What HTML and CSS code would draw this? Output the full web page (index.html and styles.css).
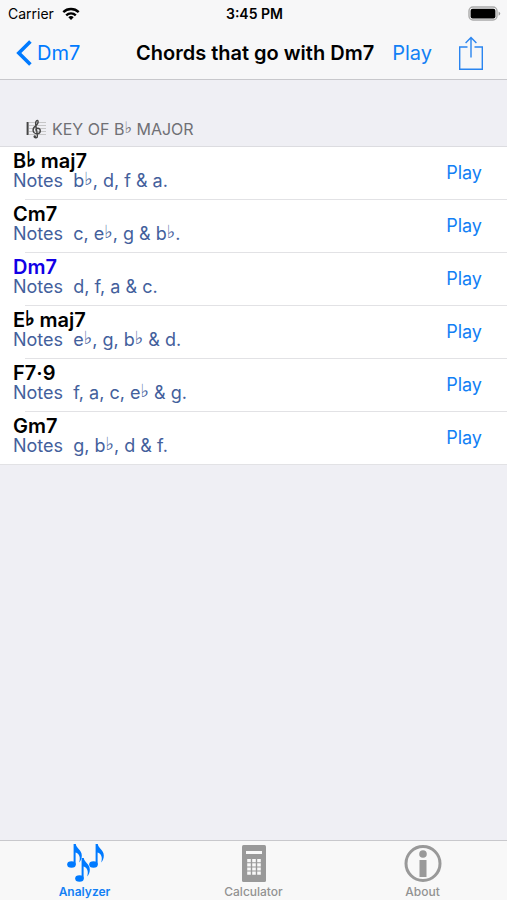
FILE: index.html
```html
<!DOCTYPE html>
<html lang="en">
<head>
    <meta charset="UTF-8">
    <meta name="viewport" content="width=device-width, initial-scale=1.0">
    <title>Chords that go with Dm7</title>
    <link rel="stylesheet" href="styles.css">
</head>
<body>
    <header class="top">
        <div class="status-bar">
            <div class="carrier">
                <span>Carrier</span>
                <svg class="wifi" viewBox="0 0 18 14" width="18" height="14" fill="none" stroke="#000" stroke-width="2.4">
                    <path d="M1.3 5.2a11 11 0 0 1 15.4 0"/>
                    <path d="M4.2 8.3a7 7 0 0 1 9.6 0"/>
                    <path d="M9 13L6.3 10.3a3.9 3.9 0 0 1 5.4 0z" fill="#000" stroke="none"/>
                </svg>
            </div>
            <span class="time">3:45 PM</span>
            <svg class="battery" viewBox="0 0 33 15" width="33" height="15">
                <rect x="1" y="1" width="28" height="13" rx="4" fill="none" stroke="#aaa" stroke-width="1.4"/>
                <rect x="2.6" y="2.8" width="24.8" height="9.6" rx="2" fill="#000"/>
                <path d="M30.6 5.4q1.6.8 1.6 2.2t-1.6 2.2z" fill="#999"/>
            </svg>
        </div>
        <nav class="nav-bar">
            <a href="#" class="back">
                <svg viewBox="0 0 16 26" width="16" height="26" fill="none" stroke="#007aff" stroke-width="3.6">
                    <path d="M14.4 1.4L2.8 13l11.6 11.6"/>
                </svg>
                <span>Dm7</span>
            </a>
            <h1>Chords that go with Dm7</h1>
            <button class="play-all">Play</button>
            <button class="share" aria-label="Share">
                <svg viewBox="0 0 26 36" width="26" height="36" fill="none" stroke="#2a85f0" stroke-width="1.4">
                    <path d="M9.5 12H1.7v22.2h22.6V12h-7.8"/>
                    <path d="M13 22.5V2.6M7.6 8L13 2.6 18.4 8"/>
                </svg>
            </button>
        </nav>
    </header>

    <main>
        <h2 class="section-title">
            <svg viewBox="0 0 20 20" width="20" height="20" fill="none">
                <path d="M3 3.5h17M3 6.5h17M3 9.5h17M3 12.5h17M3 15.5h17" stroke="#bbb" stroke-width=".8"/>
                <path d="M1.6 3v13" stroke="#444" stroke-width="2"/>
                <path d="M11.2 12.2c-1.8-.3-1.8-3 .5-3 3.4 0 3.6 5.4-.5 5.4-5.2 0-5-5.2-2-7.4 2.6-2 3.4-3.2 2.8-5.2-.6-1.5-2.6-.2-2.4 2.6l1.8 12.2c.3 2.4-2.8 2.6-3.2.8" stroke="#444" stroke-width="1.4"/>
                <circle cx="8.8" cy="17.4" r="1.2" fill="#444"/>
            </svg>
            <span>KEY OF B<i class="flat">♭</i> MAJOR</span>
        </h2>
        <ul class="chords">
            <li>
                <div class="chord">
                    <h3>B<i class="flat">♭</i> maj7</h3>
                    <p>Notes&nbsp; b<i class="flat">♭</i>, d, f &amp; a.</p>
                </div>
                <button>Play</button>
            </li>
            <li>
                <div class="chord">
                    <h3>Cm7</h3>
                    <p>Notes&nbsp; c, e<i class="flat">♭</i>, g &amp; b<i class="flat">♭</i>.</p>
                </div>
                <button>Play</button>
            </li>
            <li>
                <div class="chord current">
                    <h3>Dm7</h3>
                    <p>Notes&nbsp; d, f, a &amp; c.</p>
                </div>
                <button>Play</button>
            </li>
            <li>
                <div class="chord">
                    <h3>E<i class="flat">♭</i> maj7</h3>
                    <p>Notes&nbsp; e<i class="flat">♭</i>, g, b<i class="flat">♭</i> &amp; d.</p>
                </div>
                <button>Play</button>
            </li>
            <li>
                <div class="chord">
                    <h3>F7·9</h3>
                    <p>Notes&nbsp; f, a, c, e<i class="flat">♭</i> &amp; g.</p>
                </div>
                <button>Play</button>
            </li>
            <li>
                <div class="chord">
                    <h3>Gm7</h3>
                    <p>Notes&nbsp; g, b<i class="flat">♭</i>, d &amp; f.</p>
                </div>
                <button>Play</button>
            </li>
        </ul>
    </main>

    <nav class="tab-bar">
        <a href="#" class="active">
            <svg viewBox="0 0 40 40" width="40" height="40">
                <defs>
                    <g id="note">
                        <ellipse cx="4.5" cy="20.5" rx="4.3" ry="3.3"/>
                        <path d="M6.6 0h2.2c.3 4.2 6 6.2 6 11.4 0 2.8-.8 5-2.600 7 1.600-5.200 0-8.600-3.600-9.800v12H6.600z"/>
                    </g>
                </defs>
                <g fill="#007aff">
                    <use href="#note" x="2" y="1"/>
                    <use href="#note" x="24" y="1"/>
                    <use href="#note" x="10" y="15"/>
                </g>
            </svg>
            <span>Analyzer</span>
        </a>
        <a href="#">
            <svg viewBox="0 0 40 40" width="40" height="40">
                <rect x="8" y="2" width="24" height="37" rx="1.5" fill="#999"/>
                <rect x="12" y="8" width="16" height="3" fill="#f8f8f8"/>
                <path d="M15 16v16M20 16v16M25 16v16" stroke="#f8f8f8" stroke-width="3.6" stroke-dasharray="3.2 1"/>
            </svg>
            <span>Calculator</span>
        </a>
        <a href="#">
            <svg viewBox="0 0 40 40" width="40" height="40">
                <circle cx="20" cy="20.5" r="17" fill="none" stroke="#999" stroke-width="3"/>
                <circle cx="20" cy="11" r="3.8" fill="#999"/>
                <path d="M16.5 17h7v17h-7z" fill="#999"/>
            </svg>
            <span>About</span>
        </a>
    </nav>
</body>
</html>
```

FILE: styles.css
```css
* {
    box-sizing: border-box;
}

body {
    margin: 0;
    min-height: 100vh;
    display: flex;
    flex-direction: column;
    background-color: #efeff4;
    font-family: Inter, "Liberation Sans", sans-serif;
    color: #000;
}

h1, h2, h3, p, ul {
    margin: 0;
    padding: 0;
}

svg {
    display: block;
}

a {
    color: #007aff;
    text-decoration: none;
}

button {
    padding: 0;
    border: none;
    background: none;
    color: #1280f5;
    font-family: inherit;
    cursor: pointer;
}

.flat {
    font-family: "DejaVu Sans", sans-serif;
    font-style: normal;
    line-height: 0;
    vertical-align: 2px;
}

/* Top bars */
.top {
    background-color: #f7f7f8;
    border-bottom: 1px solid #c8c8cc;
}

.status-bar {
    height: 27px;
    padding: 0 6px 0 8px;
    display: grid;
    grid-template-columns: 1fr auto 1fr;
    align-items: center;
    font-size: 14px;
}

.carrier {
    display: flex;
    align-items: center;
    gap: 8px;
}

.time {
    font-weight: 600;
}

.battery {
    justify-self: end;
}

.nav-bar {
    height: 52px;
    padding: 0 23px 0 16px;
    display: flex;
    align-items: center;
}

.back {
    display: flex;
    align-items: center;
    gap: 5px;
    font-size: 20px;
}

.nav-bar h1 {
    flex: 1;
    text-align: right;
    font-size: 20px;
    font-weight: 600;
    white-space: nowrap;
}

.play-all {
    margin: 0 26px 0 18px;
    font-size: 20px;
}

/* Chord list */
main {
    flex: 1;
}

.section-title {
    display: flex;
    align-items: center;
    gap: 6px;
    padding: 38px 26px 6px;
    font-size: 16px;
    font-weight: 400;
    line-height: 22px;
    color: #707075;
}

.chords {
    list-style: none;
    background-color: #fff;
    border-top: 1px solid #dcdce0;
}

.chords li {
    height: 53px;
    padding: 0 25px 0 13px;
    display: flex;
    align-items: flex-start;
    justify-content: space-between;
    background: linear-gradient(#e2e2e5, #e2e2e5) 25px 100% / 100% 1px no-repeat;
}

.chords li:last-child {
    background-position: 0 100%;
}

.chord {
    padding-top: 4px;
}

.chord h3 {
    font-size: 20px;
    font-weight: 600;
    line-height: 20px;
}

.chord h3 .flat {
    -webkit-text-stroke: 1px;
}

.chord p {
    font-size: 18px;
    line-height: 20px;
    color: #43609c;
}

.current h3 {
    color: #1200e6;
}

.chords button {
    font-size: 18px;
    line-height: 52px;
}

/* Tab bar */
.tab-bar {
    height: 60px;
    padding-top: 2px;
    display: grid;
    grid-template-columns: repeat(3, 1fr);
    background-color: #f8f8f8;
    border-top: 1px solid #c8c8cc;
}

.tab-bar a {
    display: flex;
    flex-direction: column;
    align-items: center;
    gap: 1px;
    font-size: 12px;
    font-weight: 500;
    line-height: 16px;
    color: #929292;
}

.tab-bar .active {
    color: #1280f5;
    font-weight: 600;
}
```
